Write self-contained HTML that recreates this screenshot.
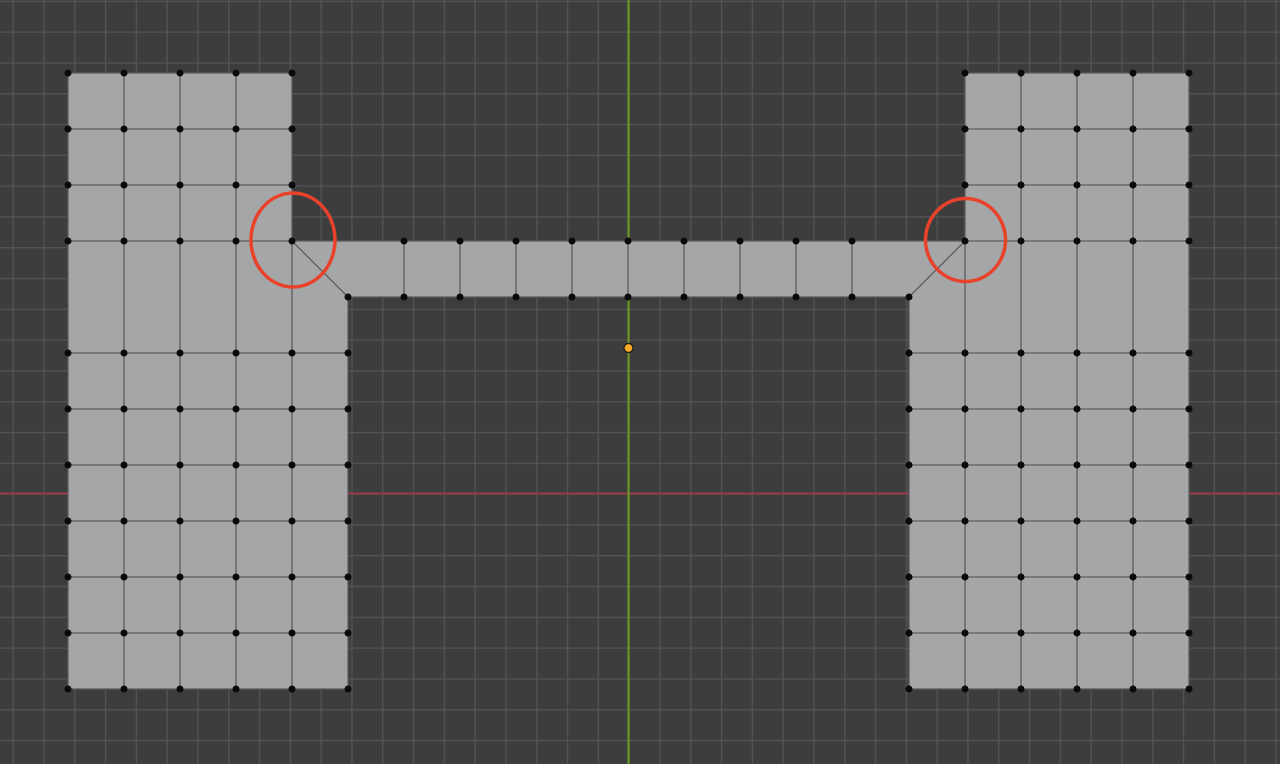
<!DOCTYPE html>
<html><head><meta charset="utf-8"><style>
html,body{margin:0;padding:0;background:#3d3d3d;width:1280px;height:764px;overflow:hidden}
svg{display:block}
</style></head><body>
<svg width="1280" height="764" viewBox="0 0 1280 764" xmlns="http://www.w3.org/2000/svg">
<defs>
<pattern id="g" patternUnits="userSpaceOnUse" x="12.5" y="0.7" width="30.8" height="30.8">
<path d="M0.5 0V30.8M0 0.5H30.8" stroke="#545454" stroke-width="1.6" fill="none"/>
</pattern>
<g id="lr">
<circle cx="68" cy="0" r="3.5"/><circle cx="124" cy="0" r="3.5"/><circle cx="180" cy="0" r="3.5"/><circle cx="236" cy="0" r="3.5"/><circle cx="292" cy="0" r="3.5"/><circle cx="348" cy="0" r="3.5"/>
<circle cx="909" cy="0" r="3.5"/><circle cx="965" cy="0" r="3.5"/><circle cx="1021" cy="0" r="3.5"/><circle cx="1077" cy="0" r="3.5"/><circle cx="1133" cy="0" r="3.5"/><circle cx="1189" cy="0" r="3.5"/>
</g>
</defs>
<rect width="1280" height="764" fill="#3d3d3d"/>
<rect width="1280" height="764" fill="url(#g)"/>
<line x1="0" y1="493.5" x2="1280" y2="493.5" stroke="#9a3a48" stroke-width="2"/>
<line x1="628.5" y1="0" x2="628.5" y2="764" stroke="#6a9a1e" stroke-width="2"/>
<path d="M68 73H292V241H965V73H1189V689H909V297H348V689H68Z" fill="#a5a6a8"/>
<g stroke="#5c5c5c" stroke-width="1.3" fill="none">
<path d="M68 73H292V241M68 73V689H348V297"/>
<path d="M124 73V689M180 73V689M236 73V689M292 241V689"/>
<path d="M68 129H292M68 185H292M68 241H965M348 297H909"/>
<path d="M68 353H348M68 409H348M68 465H348M68 521H348M68 577H348M68 633H348"/>
<path d="M292 241L348 297M965 241L909 297"/>
<path d="M404 241V297M460 241V297M516 241V297M572 241V297M628 241V297M684 241V297M740 241V297M796 241V297M852 241V297"/>
<path d="M965 73H1189V689H909V297M965 73V689M1021 73V689M1077 73V689M1133 73V689"/>
<path d="M965 129H1189M965 185H1189M965 241H1189"/>
<path d="M909 353H1189M909 409H1189M909 465H1189M909 521H1189M909 577H1189M909 633H1189"/>
</g>
<g fill="#0a0a0a">
<circle cx="68" cy="73" r="3.5"/><circle cx="124" cy="73" r="3.5"/><circle cx="180" cy="73" r="3.5"/><circle cx="236" cy="73" r="3.5"/><circle cx="292" cy="73" r="3.5"/>
<circle cx="68" cy="129" r="3.5"/><circle cx="124" cy="129" r="3.5"/><circle cx="180" cy="129" r="3.5"/><circle cx="236" cy="129" r="3.5"/><circle cx="292" cy="129" r="3.5"/>
<circle cx="68" cy="185" r="3.5"/><circle cx="124" cy="185" r="3.5"/><circle cx="180" cy="185" r="3.5"/><circle cx="236" cy="185" r="3.5"/><circle cx="292" cy="185" r="3.5"/>
<circle cx="68" cy="241" r="3.5"/><circle cx="124" cy="241" r="3.5"/><circle cx="180" cy="241" r="3.5"/><circle cx="236" cy="241" r="3.5"/><circle cx="292" cy="241" r="3.5"/>
<circle cx="404" cy="241" r="3.5"/><circle cx="460" cy="241" r="3.5"/><circle cx="516" cy="241" r="3.5"/><circle cx="572" cy="241" r="3.5"/><circle cx="628" cy="241" r="3.5"/><circle cx="684" cy="241" r="3.5"/><circle cx="740" cy="241" r="3.5"/><circle cx="796" cy="241" r="3.5"/><circle cx="852" cy="241" r="3.5"/>
<circle cx="348" cy="297" r="3.5"/><circle cx="404" cy="297" r="3.5"/><circle cx="460" cy="297" r="3.5"/><circle cx="516" cy="297" r="3.5"/><circle cx="572" cy="297" r="3.5"/><circle cx="628" cy="297" r="3.5"/><circle cx="684" cy="297" r="3.5"/><circle cx="740" cy="297" r="3.5"/><circle cx="796" cy="297" r="3.5"/><circle cx="852" cy="297" r="3.5"/><circle cx="909" cy="297" r="3.5"/>
<circle cx="965" cy="73" r="3.5"/><circle cx="1021" cy="73" r="3.5"/><circle cx="1077" cy="73" r="3.5"/><circle cx="1133" cy="73" r="3.5"/><circle cx="1189" cy="73" r="3.5"/>
<circle cx="965" cy="129" r="3.5"/><circle cx="1021" cy="129" r="3.5"/><circle cx="1077" cy="129" r="3.5"/><circle cx="1133" cy="129" r="3.5"/><circle cx="1189" cy="129" r="3.5"/>
<circle cx="965" cy="185" r="3.5"/><circle cx="1021" cy="185" r="3.5"/><circle cx="1077" cy="185" r="3.5"/><circle cx="1133" cy="185" r="3.5"/><circle cx="1189" cy="185" r="3.5"/>
<circle cx="965" cy="241" r="3.5"/><circle cx="1021" cy="241" r="3.5"/><circle cx="1077" cy="241" r="3.5"/><circle cx="1133" cy="241" r="3.5"/><circle cx="1189" cy="241" r="3.5"/>
</g>
<g fill="#0a0a0a">
<use href="#lr" y="353"/><use href="#lr" y="409"/><use href="#lr" y="465"/><use href="#lr" y="521"/><use href="#lr" y="577"/><use href="#lr" y="633"/><use href="#lr" y="689"/>
</g>
<circle cx="628.5" cy="348" r="4.5" fill="#f5a623" stroke="#1a1a1a" stroke-width="1.2"/>
<ellipse cx="293" cy="240" rx="42" ry="47" fill="none" stroke="#e8432a" stroke-width="3.5"/>
<ellipse cx="965.5" cy="240" rx="40" ry="41.5" fill="none" stroke="#e8432a" stroke-width="3.5"/>
</svg>
</body></html>
